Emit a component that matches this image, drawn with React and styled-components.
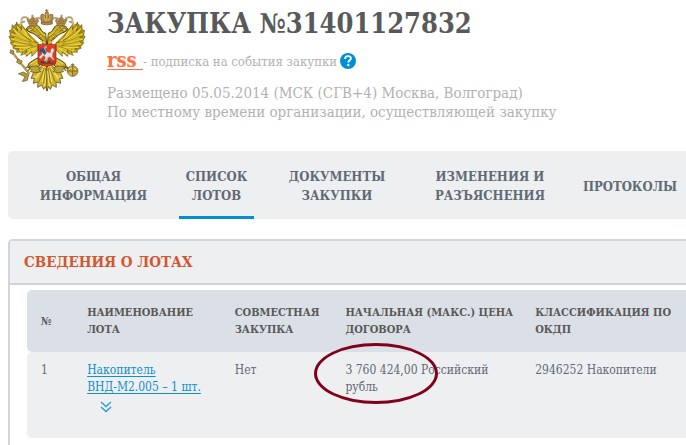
import React from "react";
import styled, { createGlobalStyle } from "styled-components";

const GlobalStyle = createGlobalStyle`
  *, *::before, *::after { box-sizing: border-box; }
  body {
    margin: 0;
    background: #fff;
    font-family: "Roboto Slab", "DejaVu Serif Condensed", "DejaVu Serif", "Liberation Serif", serif;
    color: #5f6a74;
  }
  button, a { font-family: inherit; }
`;

const Page = styled.div`
  display: flex;
  flex-direction: column;
  min-height: 100vh;
  padding: 8px 0 0 8px;
`;

const Header = styled.header`
  display: flex;
  gap: 20px;
`;

const Emblem = styled.svg`
  flex: none;
  width: 79px;
  height: 84px;
`;

const Title = styled.h1`
  margin: 0;
  font-size: 27px;
  line-height: 32px;
  font-weight: 700;
  color: #58595b;
  white-space: nowrap;
`;

const Subscription = styled.div`
  display: flex;
  align-items: center;
  height: 20px;
  margin: 11px 0 13px;
  font-size: 13px;
  color: #b2b2b2;
  white-space: pre;
`;

const RssLink = styled.a`
  height: 18px;
  line-height: 16px;
  font-size: 20px;
  font-weight: 700;
  color: #ff7043;
  text-decoration: none;
  border-bottom: 1px solid #ff7043;
`;

const HelpButton = styled.button`
  width: 16px;
  height: 16px;
  margin-left: 3px;
  padding: 0;
  border: 0;
  background: none;
  svg { display: block; }
`;

const Meta = styled.p`
  margin: 0;
  font-size: 15px;
  line-height: 19px;
  color: #b2b2b2;
  white-space: nowrap;
`;

const Tabs = styled.nav`
  display: grid;
  grid-template-columns:
    minmax(0, 123fr) minmax(0, 75fr) minmax(0, 118fr)
    minmax(0, 140fr) minmax(0, 92fr);
  column-gap: 24px;
  height: 68px;
  margin-top: 29px;
  padding: 0 10px 0 24px;
  background: #eeeff1;
  border-radius: 5px 0 0 5px;
`;

const Tab = styled.a`
  display: flex;
  align-items: center;
  justify-content: center;
  border: solid ${(p) => (p.$active ? "#0090d2" : "transparent")};
  border-width: 0 0 3px;
  padding-top: 5px;
  font-size: 13px;
  line-height: 19px;
  font-weight: 700;
  color: #5f6a74;
  text-align: center;
  text-decoration: none;
  white-space: pre;
`;

const Panel = styled.section`
  flex: 1;
  margin-top: 20px;
  border: solid #d1d6db;
  border-width: 2px 0 0 2px;
  border-radius: 5px 0 0 0;
`;

const PanelTitle = styled.h2`
  margin: 0;
  height: 44px;
  padding-left: 14px;
  background: #eeeff1;
  border-bottom: 2px solid #d1d3db;
  border-radius: 3px 0 0 0;
  font-size: 15px;
  line-height: 42px;
  font-weight: 700;
  color: #d2562e;
`;

const TableArea = styled.div`
  padding: 5px 0 7px 17px;
`;

const LotsTable = styled.table`
  width: 100%;
  table-layout: fixed;
  border-collapse: separate;
  border-spacing: 0;
  font-size: 12px;
  line-height: 17px;
`;

const Column = styled.col`
  width: ${(p) => p.$width};
`;

const HeadCell = styled.th`
  height: 62px;
  padding: 0 0 0 14px;
  background: #dbe0e7;
  color: #595959;
  font-size: 11px;
  font-weight: 700;
  text-align: left;
  vertical-align: middle;
  white-space: pre;
  &:first-child { border-radius: 5px 0 0 5px; }
`;

const Cell = styled.td`
  position: relative;
  height: 86px;
  padding: 10px 0 0 14px;
  background: #eeeff1;
  vertical-align: top;
  white-space: pre;
  &:first-child { border-radius: 5px 0 0 5px; }
`;

const LotLink = styled.a`
  color: #0e8fcf;
  text-decoration: underline;
  text-underline-offset: 2px;
`;

const ExpandButton = styled.button`
  display: block;
  margin: 5px 0 0 13px;
  padding: 0;
  border: 0;
  background: none;
  svg { display: block; }
`;

const Highlight = styled.span`
  position: absolute;
  left: -17px;
  top: -9px;
  width: 124px;
  height: 61px;
  border: 3px solid #83001a;
  border-radius: 50%;
  pointer-events: none;
`;

const tabs = [
  ["ОБЩАЯ\nИНФОРМАЦИЯ"],
  ["СПИСОК\nЛОТОВ", true],
  ["ДОКУМЕНТЫ\nЗАКУПКИ"],
  ["ИЗМЕНЕНИЯ И\nРАЗЪЯСНЕНИЯ"],
  ["ПРОТОКОЛЫ"],
];

const columns = [
  ["№", "7%"],
  ["НАИМЕНОВАНИЕ\nЛОТА", "22.4%"],
  ["СОВМЕСТНАЯ\nЗАКУПКА", "16.8%"],
  ["НАЧАЛЬНАЯ (МАКС.) ЦЕНА\nДОГОВОРА", "28.8%"],
  ["КЛАССИФИКАЦИЯ ПО\nОКДП", "25%"],
];

function EagleHalf() {
  return (
    <g strokeLinejoin="round" strokeLinecap="round">
      <path d="M50 70L64 74Q76 82 86 100L113 126V151L79 166L51 154L40 143L32 129L29 110L30 93L38 78Z" fill="#b79718" />
      <path d="M128 122C119 118 112 109 104 103C95 98 84 97 79 88C80 80 89 77 98 77C103 70 115 74 120 84C125 94 128 96 137 100L141 146L128 150Z" fill="#c4a520" stroke="#51420f" strokeWidth="3" />
      <path d="M113 128C98 130 91 113 85 101C78 89 68 84 64 72C62 78 64 84 66 90C56 83 51 77 50 66C46 74 49 84 54 92C44 87 39 82 37 74C34 84 39 94 46 101C37 99 32 96 29 90C28 101 35 108 43 112C36 114 31 112 27 109C29 120 37 122 44 123C40 128 35 129 31 128C35 137 42 136 49 134C47 140 42 143 38 144C46 149 53 146 57 142C57 149 54 153 49 156C59 159 65 152 68 147C69 155 66 162 62 166C72 164 77 157 79 150C82 157 81 164 78 169C88 166 91 158 92 151C96 158 96 164 95 169C104 164 107 155 113 151Z" fill="#d1b427" stroke="#5c4d16" strokeWidth="2" />
      <g fill="none" stroke="#ecd336" strokeWidth="4">
        <path d="M40 86Q53 103 78 116M52 80Q66 101 88 119M68 87Q78 105 99 123M36 103Q54 116 82 124M36 118Q57 127 86 130M41 132Q62 136 87 137M47 142Q68 143 92 141M62 153Q79 149 101 143M78 163Q88 154 106 145" />
        <path d="M98 83Q110 81 117 91Q124 103 135 107M105 97Q117 107 127 113M122 123L133 128" />
      </g>
      <g fill="none" stroke="#716019" strokeWidth="1.8">
        <path d="M47 87Q63 108 92 120M60 91Q73 112 98 126M42 108Q60 119 91 127M42 122Q63 131 93 133M50 138Q70 139 98 137M69 154Q82 145 106 139" />
        <path d="M100 91Q112 99 126 119M111 87Q121 104 136 113M105 84L111 88M113 106L123 104M119 114L129 110" />
      </g>
      <path d="M82 89L90 84L99 89L89 94Z" fill="#ded078" stroke="#574515" strokeWidth="2" />
      <circle cx="102" cy="83" r="2" fill="#282615" />
      <path d="M89 76L83 64Q78 56 87 57L93 66Q89 53 98 52Q109 53 103 66L110 58Q120 58 112 69L108 77Z" fill="#b48d45" stroke="#765a2d" strokeWidth="2" />
      <path d="M97 51V45M94 48H101M91 70H110M99 57V68" fill="none" stroke="#8b6838" strokeWidth="2" />
      <path d="M108 55Q124 49 128 63M84 54Q68 46 65 57T73 65Q60 64 62 75" fill="none" stroke="#c7b78b" strokeWidth="6" />
      <path d="M106 56Q121 51 126 64M83 56Q69 48 66 57M74 63Q65 64 65 73" fill="none" stroke="#766a50" strokeWidth="1.4" />
      <path d="M113 174L98 182L86 191L83 201L94 207L110 204L123 193L128 184Z" fill="#cfb12a" stroke="#554515" strokeWidth="3" />
      <path d="M91 198L78 203M95 201L84 212M104 202L98 214M110 199L111 211" fill="none" stroke="#8d7721" strokeWidth="4" />
      <path d="M111 180L94 191M116 185L101 197" fill="none" stroke="#f0d948" strokeWidth="3" />
      <path d="M141 182L130 192L119 204L101 217L93 235L103 235L100 250L114 246L113 262L125 255L131 268L136 259L141 272Z" fill="#d3b632" stroke="#5e5021" strokeWidth="2.5" />
      <path d="M137 195L127 244M130 200L108 236M138 214L134 258M121 211L103 231" fill="none" stroke="#f4df54" strokeWidth="4" />
      <path d="M133 204L117 245M137 205L131 250M127 202L106 226" fill="none" stroke="#695721" strokeWidth="2" />
      <path d="M87 203Q105 193 119 202Q113 209 123 215Q107 221 91 215Q99 210 87 203Z" fill="#bba435" stroke="#594b1f" strokeWidth="2" />
    </g>
  );
}

function StateEmblem() {
  return (
    <Emblem viewBox="24 24 237 252" role="img" aria-label="Герб России">
      <path d="M34 153L88 222" stroke="#51451e" strokeWidth="6" />
      <path d="M34 153L88 222" stroke="#c8ab38" strokeWidth="4" />
      <path d="M32 149L42 153L39 163L30 159ZM53 177L67 183L60 193L50 187ZM55 221L70 216L86 224L82 241L67 245L75 230Z" fill="#b3983c" stroke="#68582c" strokeWidth="2" />
      <EagleHalf />
      <g transform="translate(282 0) scale(-1 1)"><EagleHalf /></g>
      <g fill="#b89045" stroke="#6d532e" strokeWidth="2">
        <path d="M126 67L122 47Q123 40 131 43L137 54Q132 36 140 34Q149 36 145 54L151 43Q160 41 159 49L154 67Z" />
        <path d="M124 65Q140 71 157 65V72Q140 77 124 72Z" />
        <path d="M140 27V37M135 31H145" fill="none" />
      </g>
      <path d="M132 48L137 63M150 48L144 63M140 43V65" stroke="#e4c46c" strokeWidth="2" />
      <path d="M198 202L210 209" stroke="#6c5925" strokeWidth="6" />
      <circle cx="218" cy="213" r="16" fill="#c6a532" stroke="#6b582b" strokeWidth="2" />
      <path d="M202 213H234M218 198V229M218 198V190M213 194H223" stroke="#806b2f" strokeWidth="3" fill="none" />
      <path d="M207 208Q213 200 216 208M222 206L228 209M208 221L214 224" stroke="#f2dc73" strokeWidth="3" fill="none" />
      <path d="M114 133H168V186Q168 194 158 195Q147 195 141 201Q134 195 124 195Q114 194 114 187Z" fill="#e03a22" stroke="#722819" strokeWidth="2" />
      <path d="M116 135H166" stroke="#f15b35" strokeWidth="2" />
      <path d="M125 155L134 146L136 153L151 159L152 149L158 143L163 151L158 160L157 170L164 181L157 178L151 171L143 172L139 181L132 185L136 173L132 166L121 177L117 171L126 163Z" fill="#e4e2dc" stroke="#907b72" />
      <path d="M119 148L129 143L136 149L142 156L134 165L128 158L119 155Z" fill="#395077" />
      <circle cx="137" cy="142" r="4" fill="#9fabb8" />
      <path d="M132 143L145 167L139 189" fill="none" stroke="#ddd7ca" strokeWidth="2" />
      <path d="M119 187L127 181L138 188L148 181L155 188L163 184L160 191H126Z" fill="#594127" />
    </Emblem>
  );
}

export default function App() {
  return (
    <>
      <GlobalStyle />
      <Page>
        <Header>
          <StateEmblem />
          <div>
            <Title>ЗАКУПКА №31401127832</Title>
            <Subscription>
              <RssLink href="#rss">{"rss "}</RssLink>
              <span>- подписка на события закупки</span>
              <HelpButton type="button" aria-label="Справка">
                <svg width="16" height="16" viewBox="0 0 16 16">
                  <circle cx="8" cy="8" r="8" fill="#0090d2" />
                  <path d="M5.2 6V5.4C5.2 3.9 6.3 3.1 8 3.1S10.9 4 10.9 5.5C10.9 7.4 8.3 7.3 8.3 9.5" fill="none" stroke="#fff" strokeWidth="1.9" />
                  <circle cx="8.3" cy="12" r="1.2" fill="#fff" />
                </svg>
              </HelpButton>
            </Subscription>
            <Meta>Размещено 05.05.2014 (МСК (СГВ+4) Москва, Волгоград)</Meta>
            <Meta>По местному времени организации, осуществляющей закупку</Meta>
          </div>
        </Header>
        <Tabs>
          {tabs.map(([label, active]) => (
            <Tab key={label} href="#tab" $active={active} aria-current={active ? "page" : undefined}>{label}</Tab>
          ))}
        </Tabs>
        <Panel>
          <PanelTitle>СВЕДЕНИЯ О ЛОТАХ</PanelTitle>
          <TableArea>
            <LotsTable>
              <colgroup>
                {columns.map(([label, width]) => <Column key={label} $width={width} />)}
              </colgroup>
              <thead>
                <tr>{columns.map(([label]) => <HeadCell key={label} scope="col">{label}</HeadCell>)}</tr>
              </thead>
              <tbody>
                <tr>
                  <Cell>1</Cell>
                  <Cell>
                    <LotLink href="#lot">{"Накопитель\nВНД-М2.005 – 1 шт."}</LotLink>
                    <ExpandButton type="button" aria-label="Развернуть">
                      <svg width="12" height="12" viewBox="0 0 12 12" fill="none" stroke="#2a9bd7" strokeWidth="1.4">
                        <path d="M1 1L6 5.5L11 1M1 6L6 10.5L11 6" />
                      </svg>
                    </ExpandButton>
                  </Cell>
                  <Cell>Нет</Cell>
                  <Cell>
                    {"3 760 424,00 Российский\nрубль"}
                    <Highlight />
                  </Cell>
                  <Cell>2946252 Накопители</Cell>
                </tr>
              </tbody>
            </LotsTable>
          </TableArea>
        </Panel>
      </Page>
    </>
  );
}
